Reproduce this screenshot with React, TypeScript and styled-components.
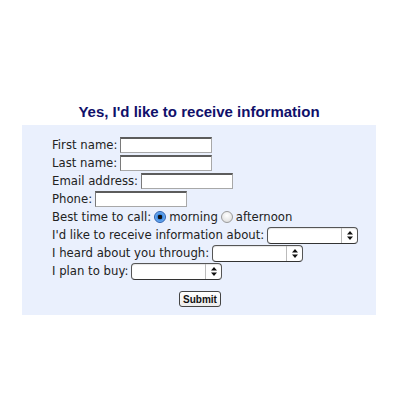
import { createGlobalStyle } from 'styled-components'
import styled from 'styled-components'

const GlobalStyle = createGlobalStyle`
  body {
    margin: 0;
    background: #ffffff;
    font-family: 'DejaVu Sans', 'Liberation Sans', sans-serif;
  }
`

const Page = styled.div`
  width: 419px;
  height: 400px;
  padding-top: 103px;
  box-sizing: border-box;
`

const Heading = styled.h2`
  width: 354px;
  margin: 0 0 4px 22px;
  text-align: center;
  font-family: 'Liberation Sans', Arial, sans-serif;
  font-size: 15px;
  line-height: 18px;
  font-weight: bold;
  color: #10106a;
`

const Panel = styled.form`
  width: 354px;
  margin-left: 22px;
  padding: 11px 0 8px 30px;
  box-sizing: border-box;
  background: #eaf0fd;
`

const Row = styled.div`
  display: flex;
  align-items: center;
  height: 18px;
  font-size: 11.7px;
  color: #222;
  white-space: nowrap;
`

const Label = styled.label`
  margin-right: 3px;
`

const TextInput = styled.input`
  width: 92px;
  height: 16px;
  box-sizing: border-box;
  margin: 0;
  padding: 0 2px;
  background: #fff;
  border: 1px solid #a8a8a8;
  border-top: 2px solid #5c5c5c;
  border-left-color: #7a7a7a;
  font-size: 11px;
  outline: none;
`

const Radio = styled.input`
  appearance: none;
  width: 12px;
  height: 12px;
  margin: 0 3px 0 0;
  border-radius: 50%;
  border: 1px solid #9a9a9a;
  background: radial-gradient(circle at 50% 35%, #ffffff, #d8d8d8);
  box-sizing: border-box;

  &:checked {
    border-color: #2a5fb0;
    background: radial-gradient(circle at 50% 50%, #111 0 2px, #3a8ae6 2.6px, #a6d0f8 100%);
  }
`

const RadioText = styled.span`
  margin-right: 3px;
`

const SelectWrap = styled.span`
  position: relative;
  display: inline-block;
  width: 91px;
  height: 17px;
`

const Select = styled.select`
  appearance: none;
  width: 100%;
  height: 100%;
  margin: 0;
  box-sizing: border-box;
  border: 1px solid #555;
  border-bottom-color: #333;
  border-radius: 4px;
  background: #fff;
  box-shadow: inset 0 1px 1px rgba(0, 0, 0, 0.1);
  outline: none;
`

const Arrows = styled.span`
  position: absolute;
  right: 1px;
  top: 1px;
  bottom: 1px;
  width: 15px;
  border-left: 1px solid #bbb;
  display: flex;
  align-items: center;
  justify-content: center;
  pointer-events: none;
`

const SubmitRow = styled.div`
  display: flex;
  justify-content: center;
  padding: 11px 28px 0 0;
`

const Submit = styled.button`
  width: 42px;
  height: 16px;
  padding: 0;
  box-sizing: border-box;
  border: 1px solid #444;
  border-radius: 3px;
  background: linear-gradient(#ffffff, #ececec);
  font-family: 'Liberation Sans', Arial, sans-serif;
  font-weight: bold;
  font-size: 10px;
  color: #111;
`

function Dropdown() {
  return (
    <SelectWrap>
      <Select>
        <option></option>
      </Select>
      <Arrows>
        <svg width="6" height="9" viewBox="0 0 6 9">
          <path d="M0 3.5 L3 0 L6 3.5 Z M0 5.5 L3 9 L6 5.5 Z" fill="#111" />
        </svg>
      </Arrows>
    </SelectWrap>
  )
}

export default function App() {
  return (
    <Page>
      <GlobalStyle />
      <Heading>Yes, I'd like to receive information</Heading>
      <Panel onSubmit={(e) => e.preventDefault()}>
        <Row>
          <Label>First name:</Label>
          <TextInput type="text" />
        </Row>
        <Row>
          <Label>Last name:</Label>
          <TextInput type="text" />
        </Row>
        <Row>
          <Label>Email address:</Label>
          <TextInput type="text" />
        </Row>
        <Row>
          <Label>Phone:</Label>
          <TextInput type="text" />
        </Row>
        <Row>
          <Label>Best time to call:</Label>
          <Radio type="radio" name="time" defaultChecked />
          <RadioText>morning</RadioText>
          <Radio type="radio" name="time" />
          <RadioText>afternoon</RadioText>
        </Row>
        <Row>
          <Label>I'd like to receive information about:</Label>
          <Dropdown />
        </Row>
        <Row>
          <Label>I heard about you through:</Label>
          <Dropdown />
        </Row>
        <Row>
          <Label>I plan to buy:</Label>
          <Dropdown />
        </Row>
        <SubmitRow>
          <Submit type="submit">Submit</Submit>
        </SubmitRow>
      </Panel>
    </Page>
  )
}
